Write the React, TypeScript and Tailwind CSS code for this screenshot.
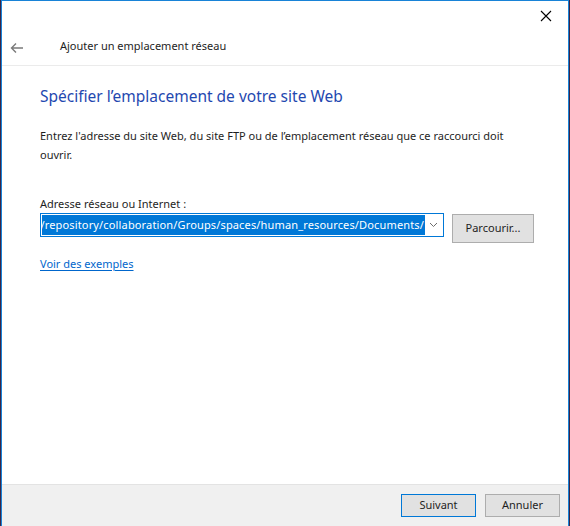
import React from "react";

const font = { fontFamily: '"Noto Sans", "Segoe UI", Arial, sans-serif' };

export default function App() {
  return (
    <div className="w-[570px] h-[526px] bg-[#3b2647] flex overflow-hidden" style={font}>
      <div className="ml-[1px] w-[568px] h-[526px] border-t border-l border-r border-[#1883d7] bg-white flex flex-col">
        {/* title bar */}
        <div className="h-[30px] flex justify-end items-start">
          <div className="w-[46px] h-[29px] flex items-center justify-center mr-[-1px]">
            <svg width="12" height="12" viewBox="0 0 12 12">
              <path d="M1 1 L11 11 M11 1 L1 11" stroke="#000" strokeWidth="1.1" fill="none" />
            </svg>
          </div>
        </div>
        {/* header */}
        <div className="h-[35px] flex items-center border-b border-[#ebebeb]">
          <div className="w-[14px] ml-[8px] flex items-center">
            <svg width="14" height="12" viewBox="0 0 14 12">
              <path d="M1.5 6 H13 M6 1.5 L1.5 6 L6 10.5" stroke="#7a7a7a" strokeWidth="1.4" fill="none" />
            </svg>
          </div>
          <span className="ml-[36px] text-[11px] text-[#1e1e1e] mt-[-3px]">Ajouter un emplacement réseau</span>
        </div>
        {/* content */}
        <div className="flex-1 pl-[38px] pr-[30px] pt-[18px]">
          <div className="text-[15.5px] text-[#1f48b0] leading-[24px]">Spécifier l’emplacement de votre site Web</div>
          <div className="mt-[18px] text-[11px] leading-[19px] text-[#1e1e1e]">
            Entrez l'adresse du site Web, du site FTP ou de l’emplacement réseau que ce raccourci doit
            <br />
            ouvrir.
          </div>
          <div className="mt-[32px] text-[11px] leading-[16px] text-[#1e1e1e]">Adresse réseau ou Internet :</div>
          <div className="mt-[2px] flex items-start">
            <div className="w-[404px] h-[24px] border border-[#0078d7] flex items-center pl-[1px] pr-[2px] mt-[-1px]">
              <div className="flex-1 h-[20px] overflow-hidden flex justify-end">
                <span className="whitespace-nowrap bg-[#0078d7] text-white text-[11px] leading-[20px] pl-[1px] pr-[1px] tracking-[0.15px]">
                  /repository/collaboration/Groups/spaces/human_resources/Documents/
                </span>
              </div>
              <div className="w-[16px] flex items-center justify-center">
                <svg width="9" height="6" viewBox="0 0 9 6">
                  <path d="M1 1 L4.5 4.5 L8 1" stroke="#6d6d6d" strokeWidth="1" fill="none" />
                </svg>
              </div>
            </div>
            <div className="ml-[8px] w-[82px] h-[29px] bg-[#e1e1e1] border border-[#adadad] flex items-center justify-center text-[11px] text-[#1e1e1e]">
              Parcourir...
            </div>
          </div>
          <div className="mt-[12px] text-[11px] leading-[18px] text-[#0066cc] underline underline-offset-2">Voir des exemples</div>
        </div>
        {/* footer */}
        <div className="h-[42px] bg-[#f0f0f0] border-t border-[#e3e3e3] flex items-center justify-end pr-[8px] gap-[9px]">
          <div className="w-[75px] h-[23px] bg-[#e1e1e1] border border-[#0078d7] flex items-center justify-center text-[11px] text-[#1e1e1e]">
            Suivant
          </div>
          <div className="w-[75px] h-[23px] bg-[#e1e1e1] border border-[#adadad] flex items-center justify-center text-[11px] text-[#1e1e1e]">
            Annuler
          </div>
        </div>
      </div>
    </div>
  );
}
